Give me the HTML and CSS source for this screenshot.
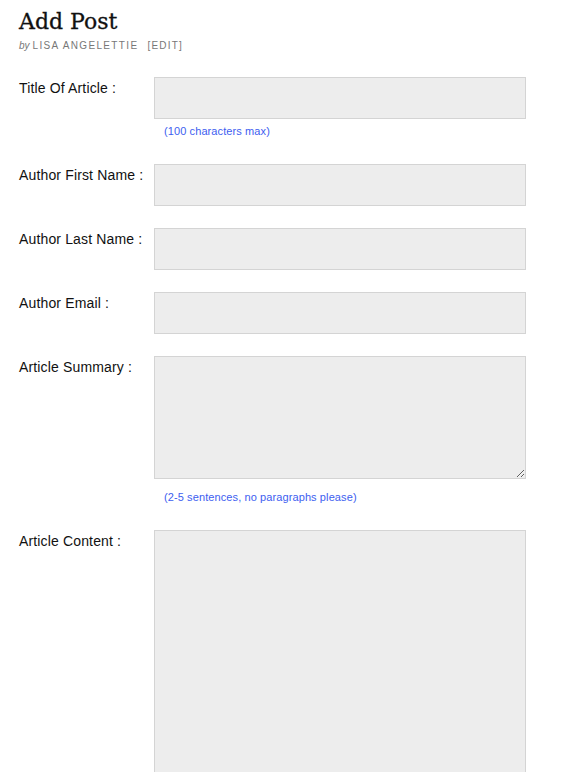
FILE: index.html
```html
<!DOCTYPE html>
<html>
<head>
<meta charset="utf-8">
<link rel="stylesheet" href="styles.css">
</head>
<body>
<div class="page">
  <header class="post-head">
    <h1 class="post-title">Add Post</h1>
    <div class="byline"><span class="by">by</span><span class="author">LISA ANGELETTIE</span><span class="edit">[EDIT]</span></div>
  </header>
  <form class="post-form">
    <div class="row">
      <label class="label">Title Of Article :</label>
      <div class="field">
        <input class="input" type="text">
        <div class="hint">(100 characters max)</div>
      </div>
    </div>
    <div class="row">
      <label class="label">Author First Name :</label>
      <div class="field"><input class="input" type="text"></div>
    </div>
    <div class="row">
      <label class="label">Author Last Name :</label>
      <div class="field"><input class="input" type="text"></div>
    </div>
    <div class="row">
      <label class="label">Author Email :</label>
      <div class="field"><input class="input" type="text"></div>
    </div>
    <div class="row">
      <label class="label">Article Summary :</label>
      <div class="field">
        <textarea class="input area-summary"></textarea>
        <div class="hint hint-area">(2-5 sentences, no paragraphs please)</div>
      </div>
    </div>
    <div class="row">
      <label class="label">Article Content :</label>
      <div class="field"><textarea class="input area-content"></textarea></div>
    </div>
  </form>
</div>
</body>
</html>
```
FILE: styles.css
```css
html, body {
  margin: 0;
  padding: 0;
  background: #ffffff;
}
.page {
  padding: 8px 0 0 19px;
  font-family: "Liberation Sans", Arial, sans-serif;
  color: #111;
}
.post-head {
  margin-bottom: 23px;
}
.post-title {
  margin: 0;
  font-family: "DejaVu Serif", "Liberation Serif", serif;
  font-weight: normal;
  font-size: 22px;
  line-height: 28px;
  color: #111;
  -webkit-text-stroke: 0.3px #111;
}
.byline {
  font-size: 10px;
  line-height: 16px;
  color: #777;
  margin-top: 2px;
}
.by {
  font-style: italic;
  margin-right: 3px;
}
.author {
  letter-spacing: 1.35px;
}
.edit {
  margin-left: 9px;
  letter-spacing: 1.2px;
}
.post-form {
  display: flex;
  flex-direction: column;
  gap: 22px;
}
.row {
  display: grid;
  grid-template-columns: 135px 372px;
}
.label {
  font-size: 14px;
  line-height: 18px;
  padding-top: 2px;
  color: #111;
  letter-spacing: 0.15px;
}
.field {
  display: flex;
  flex-direction: column;
}
.input {
  box-sizing: border-box;
  width: 372px;
  height: 42px;
  margin: 0;
  border: 1px solid #d4d4d4;
  background: #ededed;
  border-radius: 0;
  outline: none;
  padding: 4px;
  font-family: "Liberation Sans", Arial, sans-serif;
  font-size: 13px;
}
.area-summary {
  height: 123px;
  resize: vertical;
}
.area-content {
  height: 320px;
}
.hint {
  font-size: 11px;
  line-height: 14px;
  color: #3d5ef0;
  padding: 5px 0 4px 10px;
  letter-spacing: 0.1px;
}
.hint-area {
  padding-top: 11px;
}
```
